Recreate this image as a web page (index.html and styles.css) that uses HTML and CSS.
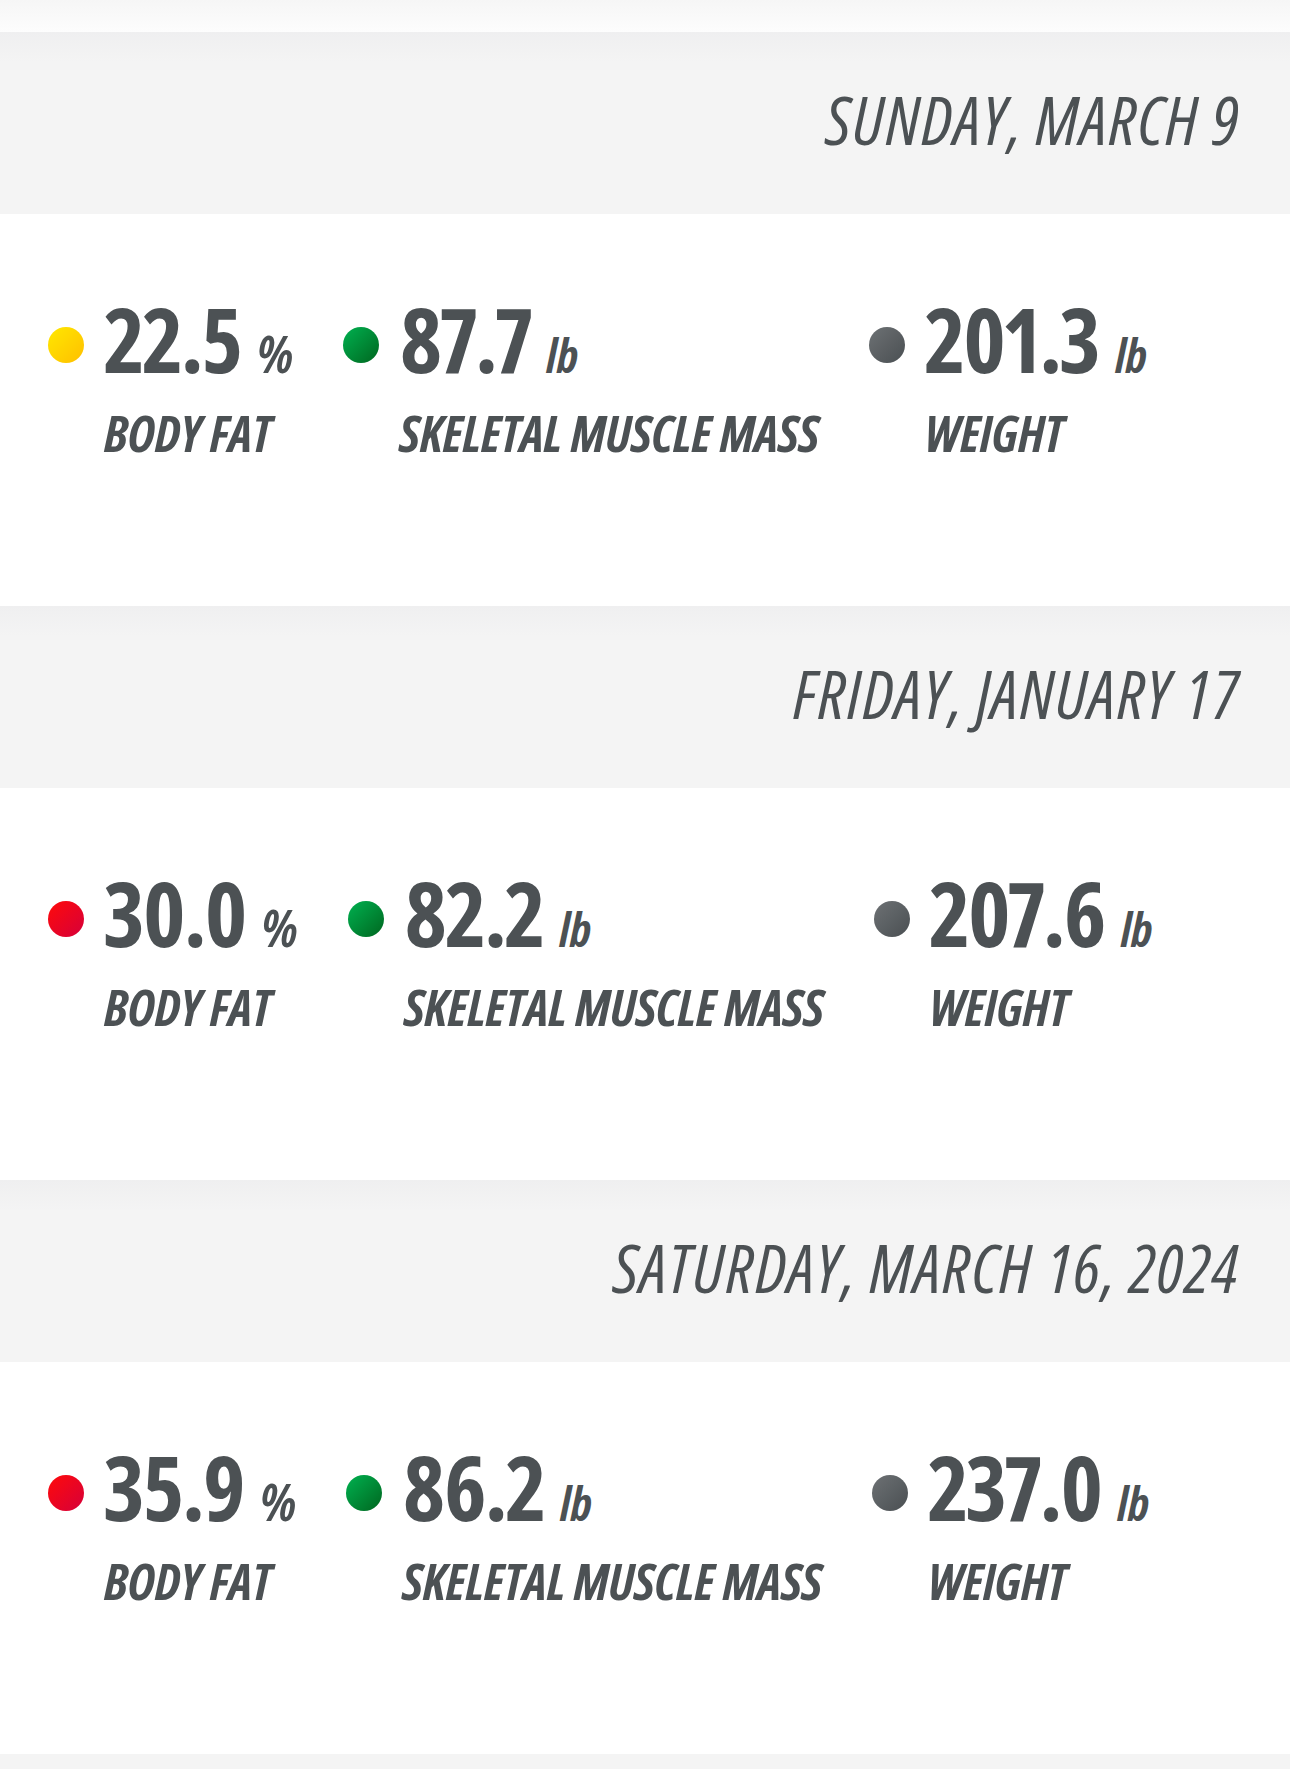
FILE: index.html
```html
<!DOCTYPE html>
<html lang="en">
<head>
<meta charset="utf-8">
<title>Body composition history</title>
<link rel="stylesheet" href="styles.css">
</head>
<body>
<div class="topbar"></div>
<main class="list">
  <section class="entry">
    <header class="date">SUNDAY, MARCH 9</header>
    <div class="metrics">
      <div class="metric">
        <span class="dot dot-yellow"></span>
        <div class="info">
          <div class="value"><span class="num">22.5</span><span class="unit unit-pct">%</span></div>
          <div class="label">BODY FAT</div>
        </div>
      </div>
      <div class="metric">
        <span class="dot dot-green"></span>
        <div class="info">
          <div class="value"><span class="num">87.7</span><span class="unit">lb</span></div>
          <div class="label">SKELETAL MUSCLE MASS</div>
        </div>
      </div>
      <div class="metric">
        <span class="dot dot-gray"></span>
        <div class="info">
          <div class="value"><span class="num">201.3</span><span class="unit">lb</span></div>
          <div class="label">WEIGHT</div>
        </div>
      </div>
    </div>
  </section>
  <section class="entry">
    <header class="date">FRIDAY, JANUARY 17</header>
    <div class="metrics">
      <div class="metric">
        <span class="dot dot-red"></span>
        <div class="info">
          <div class="value"><span class="num">30.0</span><span class="unit unit-pct">%</span></div>
          <div class="label">BODY FAT</div>
        </div>
      </div>
      <div class="metric">
        <span class="dot dot-green"></span>
        <div class="info">
          <div class="value"><span class="num">82.2</span><span class="unit">lb</span></div>
          <div class="label">SKELETAL MUSCLE MASS</div>
        </div>
      </div>
      <div class="metric">
        <span class="dot dot-gray"></span>
        <div class="info">
          <div class="value"><span class="num">207.6</span><span class="unit">lb</span></div>
          <div class="label">WEIGHT</div>
        </div>
      </div>
    </div>
  </section>
  <section class="entry">
    <header class="date">SATURDAY, MARCH 16, 2024</header>
    <div class="metrics">
      <div class="metric">
        <span class="dot dot-red"></span>
        <div class="info">
          <div class="value"><span class="num">35.9</span><span class="unit unit-pct">%</span></div>
          <div class="label">BODY FAT</div>
        </div>
      </div>
      <div class="metric">
        <span class="dot dot-green"></span>
        <div class="info">
          <div class="value"><span class="num">86.2</span><span class="unit">lb</span></div>
          <div class="label">SKELETAL MUSCLE MASS</div>
        </div>
      </div>
      <div class="metric">
        <span class="dot dot-gray"></span>
        <div class="info">
          <div class="value"><span class="num">237.0</span><span class="unit">lb</span></div>
          <div class="label">WEIGHT</div>
        </div>
      </div>
    </div>
  </section>
  <div class="next-header"></div>
</main>
</body>
</html>
```
FILE: styles.css
```css
html, body {
  margin: 0;
  padding: 0;
  background: #ffffff;
}
body {
  font-family: "Open Sans", "Roboto", sans-serif;
  font-stretch: 75%;
  color: #4c5154;
}
.topbar {
  height: 32px;
  background: linear-gradient(#f6f6f6, #fdfdfd);
}
.date {
  box-sizing: border-box;
  height: 182px;
  padding: 53px 50px 0 0;
  text-align: right;
  font-style: italic;
  font-weight: 400;
  font-size: 67.5px;
  line-height: 68px;
  letter-spacing: 1.6px;
  background: linear-gradient(#efeff0 0, #f4f4f4 30px, #f4f4f4 100%);
}
.metrics {
  box-sizing: border-box;
  height: 392px;
  padding: 79px 0 0 48px;
  display: flex;
  gap: 50px;
}
.metric {
  display: flex;
  gap: 20px;
  align-items: flex-start;
}
.dot {
  flex: none;
  width: 36px;
  height: 36px;
  margin-top: 34px;
  border-radius: 50%;
}
.dot-yellow { background: linear-gradient(135deg, #ffe800, #ffbf00); }
.dot-green { background: linear-gradient(135deg, #00b150, #00661f); }
.dot-red { background: linear-gradient(135deg, #ff0a0a, #d6003a); }
.dot-gray { background: linear-gradient(135deg, #6d7174, #4a4f52); }
.info {
  display: flex;
  flex-direction: column;
  gap: 24px;
}
.value {
  display: flex;
  align-items: baseline;
  white-space: nowrap;
}
.num {
  font-weight: 700;
  font-size: 90px;
  line-height: 90px;
  letter-spacing: -2px;
  font-variant-numeric: proportional-nums;
}
.unit {
  margin-left: 16px;
  font-style: italic;
  font-weight: 700;
  font-size: 47px;
  line-height: 47px;
}
.unit-pct {
  margin-left: 16px;
  font-size: 52px;
  line-height: 52px;
}
.label {
  font-style: italic;
  font-weight: 700;
  font-size: 51px;
  line-height: 51px;
  letter-spacing: -0.4px;
  white-space: nowrap;
}
.next-header {
  height: 40px;
  background: #f4f4f4;
}
```
